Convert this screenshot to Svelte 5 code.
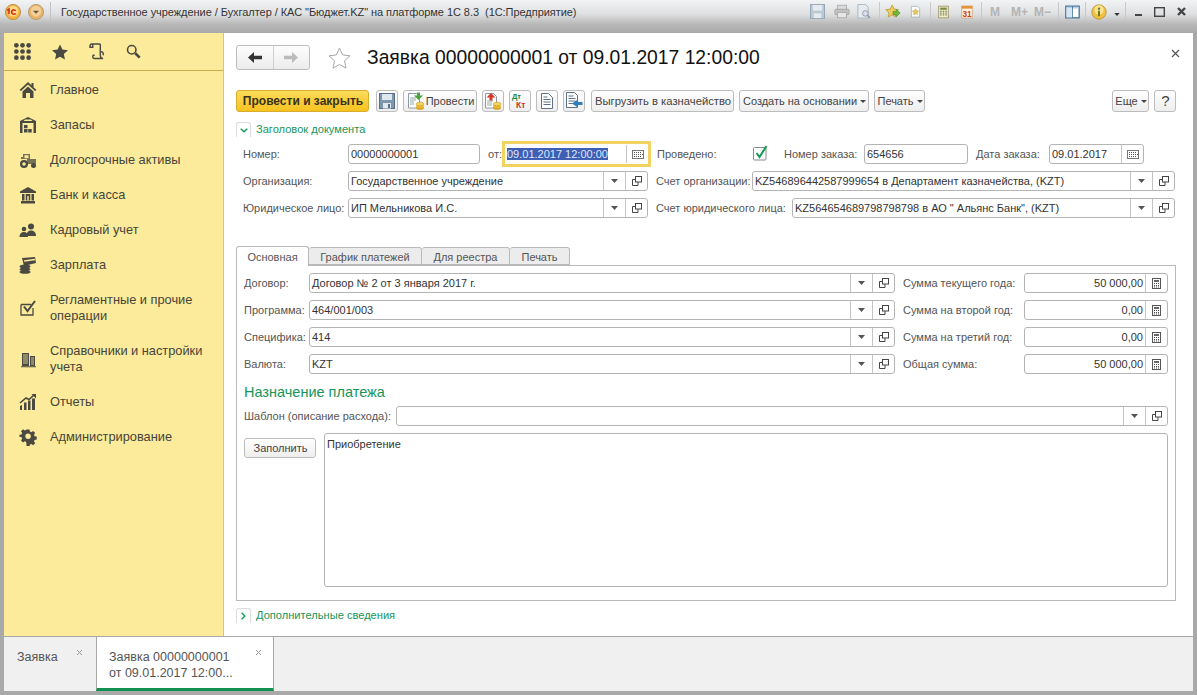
<script lang="ts">
  const menu = [
    { icon: 'home', label: ['Главное'] },
    { icon: 'stock', label: ['Запасы'] },
    { icon: 'tractor', label: ['Долгосрочные активы'] },
    { icon: 'bank', label: ['Банк и касса'] },
    { icon: 'people', label: ['Кадровый учет'] },
    { icon: 'salary', label: ['Зарплата'] },
    { icon: 'check', label: ['Регламентные и прочие', 'операции'] },
    { icon: 'book', label: ['Справочники и настройки', 'учета'] },
    { icon: 'chart', label: ['Отчеты'] },
    { icon: 'gear', label: ['Администрирование'] }
  ];

  const amounts = [
    { label: 'Сумма текущего года:', value: '50 000,00' },
    { label: 'Сумма на второй год:', value: '0,00' },
    { label: 'Сумма на третий год:', value: '0,00' },
    { label: 'Общая сумма:', value: '50 000,00' }
  ];
  const leftRows = [
    { label: 'Договор:', value: 'Договор № 2 от 3 января 2017 г.' },
    { label: 'Программа:', value: '464/001/003' },
    { label: 'Специфика:', value: '414' },
    { label: 'Валюта:', value: 'KZT' }
  ];
  const tabs = ['Основная', 'График платежей', 'Для реестра', 'Печать'];
</script>

{#snippet drop()}
  <span class="fbtn"><svg width="7" height="4" viewBox="0 0 7 4"><path d="M0 0h7L3.5 4z" fill="#555"/></svg></span>
{/snippet}
{#snippet open()}
  <span class="fbtn"><svg width="10" height="10" viewBox="0 0 10 10" fill="none" stroke="#444"><rect x="3.5" y="0.5" width="6" height="5.5" fill="#fff"/><path d="M3.5 3.500H.5v6h5.500V6"/></svg></span>
{/snippet}
{#snippet cal()}
  <span class="fbtn"><svg width="12" height="9" viewBox="0 0 12 9"><rect x=".5" y=".5" width="11" height="8" fill="#fff" stroke="#777"/><path d="M2 2.500h1M4 2.500h1M6 2.500h1M8 2.500h1M2 4.500h1M4 4.500h1M6 4.500h1M8 4.500h1M10 4.500h1M2 6.500h1M4 6.500h1M6 6.500h1M8 6.500h1" stroke="#555"/></svg></span>
{/snippet}
{#snippet calc()}
  <span class="fbtn"><svg width="9" height="11" viewBox="0 0 9 11"><rect x=".5" y=".5" width="8" height="10" fill="#fff" stroke="#555"/><rect x="2" y="2" width="5" height="2" fill="#666"/><path d="M2 5.500h1M4 5.500h1M6 5.500h1M2 7.500h1M4 7.500h1M6 7.500h1M2 9h1M4 9h1M6 9h1" stroke="#444"/></svg></span>
{/snippet}
{#snippet coins(x, y)}
  <g transform="translate({x} {y})"><ellipse cx="4" cy="6" rx="4" ry="1.800" fill="#d9a520"/><ellipse cx="4" cy="4" rx="4" ry="1.800" fill="#e8bd3a"/><ellipse cx="4" cy="2" rx="4" ry="1.800" fill="#f4d660" stroke="#c08f18" stroke-width=".5"/></g>
{/snippet}
{#snippet menuIcon(name)}
  <svg class="micon" width="18" height="18" viewBox="0 0 18 18" fill="#4a4a42">
    {#if name === 'home'}
      <path d="M9 1 0.5 9l1.500 1L9 3.600 16 10l1.500-1-3-2.800V2h-2v2.300z"/><path d="M3.500 10.500 9 5.500l5.500 5V17H11v-5H7v5H3.500z"/>
    {:else if name === 'stock'}
      <path d="M9 1 1 5v12h16V5zM6 3.500h6L13.500 5h-9z"/><rect x="3.500" y="7" width="11" height="10" fill="#fbeb9a"/><rect x="5" y="9" width="3.500" height="3.200"/><rect x="5" y="13" width="3.500" height="3.500"/><rect x="9.200" y="13" width="3.500" height="3.500"/>
    {:else if name === 'tractor'}
      <path d="M4 3h7v5h6v5H8V8H2V6h2z" opacity=".75"/><rect x="5.500" y="4.200" width="4" height="3" fill="#fbeb9a"/><circle cx="5" cy="13" r="4"/><circle cx="5" cy="13" r="1.800" fill="#fbeb9a"/><circle cx="14.500" cy="14.500" r="2.500"/>
    {:else if name === 'bank'}
      <path d="M9 1 1 5.500V7h16V5.500z"/><rect x="2" y="15" width="14" height="2.500"/><rect x="3" y="8" width="2.500" height="6.500"/><rect x="12.500" y="8" width="2.500" height="6.500"/><rect x="6.700" y="8" width="4.600" height="6.500"/><rect x="8.300" y="10" width="1.400" height="4.500" fill="#fbeb9a"/>
    {:else if name === 'people'}
      <circle cx="12" cy="5.500" r="3"/><path d="M7.500 15c0-4 2-5.500 4.500-5.500s5 1.500 5 5.500z"/><circle cx="5" cy="8" r="2.300"/><path d="M.5 16c0-3.500 2-5 4.500-5s4 1.500 4 5z"/>
    {:else if name === 'salary'}
      <path d="M3 2 16 1l1 6-12 3z"/><rect x="5" y="3.600" width="11" height="1.500" fill="#fbeb9a" transform="rotate(-8 10 4)"/><ellipse cx="6" cy="10.500" rx="5.500" ry="2"/><ellipse cx="6" cy="13.300" rx="5.500" ry="2"/><ellipse cx="6" cy="16" rx="5.500" ry="1.800"/>
    {:else if name === 'check'}
      <path d="M2 5.500h10M2 5.500v10.500h12V9" fill="none" stroke="#4a4a42" stroke-width="1.300"/><path d="M5 7.500l3.500 4.500L16 2" fill="none" stroke="#4a4a42" stroke-width="2"/>
    {:else if name === 'book'}
      <path d="M3 3h7v13H3zM11 6h5v10h-5zM2 16.200h15v1H2z"/><path d="M4 5h5M4 7h5M4 9h5M4 11h5M4 13h5M12 8h3M12 10h3M12 12h3M12 14h3" stroke="#fbeb9a" stroke-width=".8"/>
    {:else if name === 'chart'}
      <path d="M1 13l2-1v5H1zM5 9.500h2.500V17H5zM9 7.500h2.500V17H9zM13 5.500h3V17h-3z"/><path d="M1 10 7 5l3 1.500L15 2" fill="none" stroke="#4a4a42" stroke-width="1.600"/><path d="M12.500 1H17v4.500z"/>
    {:else}
      <path fill-rule="evenodd" d="M7.400 1h3.200l.4 2.300 1.500.7 2-1.300 2.200 2.200-1.300 2 .7 1.500 2.300.4v3.200l-2.300.4-.7 1.500 1.300 2-2.200 2.200-2-1.300-1.500.7-.4 2.300H7.400L7 14.600l-1.500-.7-2 1.300-2.200-2.200 1.300-2-.7-1.500L-.4 9.100V6.900l2.300-.4.7-1.500-1.300-2L3.500 .8l2 1.300 1.500-.7zM9 5.500a3 3 0 100 6 3 3 0 000-6z" transform="translate(.8 .5) scale(.92)"/>
    {/if}
  </svg>
{/snippet}

<div class="window">
  <header class="titlebar">
    <div class="tleft">
      <svg width="16" height="16" viewBox="0 0 18 18"><circle cx="9" cy="9" r="8.500" fill="#f6b13a" stroke="#b98a4a"/><circle cx="9" cy="8" r="6" fill="#fbd985"/><path d="M4 7l2-1.500V11M13.500 7.500a2.500 2.500 0 100 2.800" transform="translate(-1.500 .2)" fill="none" stroke="#d2281c" stroke-width="1.700"/></svg>
      <svg width="16" height="16" viewBox="0 0 18 18"><circle cx="9" cy="9" r="8.500" fill="#e8b26a" stroke="#b4956a"/><circle cx="9" cy="8" r="6" fill="#f4cf98"/><path d="M5.500 7.500h7L9 11z" fill="#6a5a40"/></svg>
      <span class="tsep"></span>
      <span class="ttext">Государственное учреждение / Бухгалтер / КАС "Бюджет.KZ" на платформе 1С 8.3&nbsp; (1С:Предприятие)</span>
    </div>
    <div class="tright">
      <svg width="15" height="15" viewBox="0 0 16 16"><rect x=".5" y=".5" width="15" height="15" fill="#bcc8d4" stroke="#93a5b6"/><rect x="3" y="1" width="10" height="6" fill="#e5ebf0"/><rect x="4" y="10" width="8" height="5" fill="#e5ebf0"/></svg>
      <svg width="16" height="15" viewBox="0 0 18 16"><rect x="4" y="1" width="10" height="5" fill="#ddd" stroke="#aaa"/><rect x="1" y="5.500" width="16" height="6" rx="1" fill="#c2c2c2" stroke="#a5a5a5"/><rect x="4" y="9" width="10" height="6" fill="#e6e6e6" stroke="#aaa"/></svg>
      <svg width="15" height="15" viewBox="0 0 16 16"><path d="M2 .5h8l3 3V15H2z" fill="#e6ebef" stroke="#aab5bf"/><circle cx="10" cy="10" r="3" fill="#dde" stroke="#8d99a5"/><path d="M12 12l3 3" stroke="#8d99a5" stroke-width="1.500"/></svg>
      <span class="sep"></span>
      <svg width="16" height="15" viewBox="0 0 20 18"><path d="M9 1l2.400 5 5.500.7-4 3.800 1 5.500-4.900-2.700L4 16l1-5.500-4-3.800 5.500-.7z" fill="#f0cd5b" stroke="#b29a3a"/><path d="M10 9h4V6.500L19 11l-5 4.500V13h-4z" fill="#71b83c" stroke="#3f8a25" stroke-width=".7"/></svg>
      <svg width="11" height="13" viewBox="0 0 16 18"><path d="M2 1.500h9l3 3V17H2z" fill="#fff" stroke="#93a5b6"/><path d="M8 5l1.400 3 3.100.4-2.300 2.100.6 3.100L8 12.100 5.200 13.600l.6-3.100-2.300-2.100 3.100-.4z" fill="#f0cd5b" stroke="#a88e36" stroke-width=".7"/></svg>
      <span class="sep"></span>
      <svg width="11" height="14" viewBox="0 0 15 18"><rect x="1" y="1" width="13" height="16" fill="#f0eccb" stroke="#8f8a55"/><rect x="3" y="3" width="9" height="3" fill="#7b8c45"/><path d="M3 8h2M6.500 8h2M10 8h2M3 10.500h2M6.500 10.500h2M10 10.500h2M3 13h2M6.500 13h2M10 13h2" stroke="#5a6640" stroke-width="1.300"/></svg>
      <svg width="12" height="14" viewBox="0 0 16 18"><rect x="1" y="1" width="14" height="16" fill="#fdf3de" stroke="#c9a271"/><rect x="1" y="1" width="14" height="3.500" fill="#e8913c"/><text class="day" x="8" y="15" text-anchor="middle">31</text></svg>
      <span class="sep"></span>
      <span class="mem">M</span><span class="mem">M+</span><span class="mem">M−</span>
      <span class="sep"></span>
      <svg width="15" height="14" viewBox="0 0 18 16"><rect x="1" y="1" width="16" height="14" fill="#fff" stroke="#3c6e9a" stroke-width="1.500"/><rect x="1.800" y="1.800" width="14.400" height="2" fill="#b5d0e5"/><path d="M9 1v14" stroke="#3c6e9a"/><rect x="2" y="4" width="6.500" height="10.500" fill="#d7e7f2"/></svg>
      <span class="sep"></span>
      <svg width="16" height="16" viewBox="0 0 19 19"><circle cx="9.500" cy="9.500" r="8.500" fill="#f1c23f" stroke="#b98f30"/><circle cx="9.500" cy="7" r="5.500" fill="#fbe38f"/><rect x="8.300" y="8" width="2.400" height="6.500" fill="#6f7a2a"/><circle cx="9.500" cy="5.500" r="1.400" fill="#6f7a2a"/></svg>
      <svg class="caret" width="6" height="3" viewBox="0 0 7 4"><path d="M0 0h7L3.500 4z" fill="#333"/></svg>
      <span class="sep"></span>
      <svg class="wmin" width="7" height="2" viewBox="0 0 7 2"><rect width="7" height="2" fill="#444"/></svg>
      <svg width="11" height="10" viewBox="0 0 11 10" fill="none"><rect x=".7" y=".7" width="9.600" height="8.600" stroke="#444" stroke-width="1.400"/></svg>
      <svg width="9" height="9" viewBox="0 0 9 9"><path d="M1 1l7 7M8 1L1 8" stroke="#444" stroke-width="2.400"/></svg>
    </div>
  </header>

  <div class="body">
    <aside class="side">
      <div class="quick">
        <svg width="17" height="17" viewBox="0 0 18 18" fill="#4a4a42">
          {#each [2.5, 9, 15.5] as y}{#each [2.5, 9, 15.5] as x}<circle cx={x} cy={y} r="2.500"/>{/each}{/each}
        </svg>
        <svg width="16" height="16" viewBox="0 0 18 17" fill="#4a4a42"><path d="M9 0l2.700 5.800 6.300.7-4.700 4.300 1.300 6.200L9 13.900 3.400 17l1.300-6.200L0 6.500l6.300-.7z"/></svg>
        <svg width="16" height="17" viewBox="0 0 17 18" fill="none" stroke="#4a4a42" stroke-width="1.500"><path d="M3 1h8c1.500 0 1 2 1 3v9c0 2 1 3.500 3 3.500H6c-2 0-2.500-2-1.500-3.500H6M3 1C1.500 1 .8 2.500 1 4.500h3V2.500C4 1.500 3.800 1 3 1zM12 9c3 0 3.500 2 3 4"/></svg>
        <svg width="15" height="15" viewBox="0 0 17 17" fill="none" stroke="#4a4a42"><circle cx="6.500" cy="6.500" r="4.800" stroke-width="1.800"/><path d="M10.500 10.500l5 5" stroke-width="3"/></svg>
      </div>
      <nav class="menu">
        {#each menu as m}
          <div class="mitem">
            {@render menuIcon(m.icon)}
            <div class="mlabel">{#each m.label as l}<div>{l}</div>{/each}</div>
          </div>
        {/each}
      </nav>
    </aside>

    <main class="main">
      <div class="head">
        <div class="nav">
          <span class="navb"><svg width="14" height="11" viewBox="0 0 14 11"><path d="M0 5.500 6 0v3.700h8v3.600H6V11z" fill="#333"/></svg></span>
          <span class="navb"><svg width="14" height="11" viewBox="0 0 14 11"><path d="M14 5.500 8 0v3.700H0v3.600h8V11z" fill="#bbb"/></svg></span>
        </div>
        <svg class="hstar" width="23" height="22" viewBox="0 0 23 22"><path d="M11.500 1l3.100 6.900 7.400.9-5.500 5 1.500 7.300-6.500-3.700L5 21.100l1.500-7.300L1 8.800l7.400-.9z" fill="#fff" stroke="#a8a8a8"/></svg>
        <h1>Заявка 00000000001 от 09.01.2017 12:00:00</h1>
        <svg class="hclose" width="9" height="9" viewBox="0 0 9 9"><path d="M1 1l7 7M8 1L1 8" stroke="#555" stroke-width="1.200"/></svg>
      </div>

      <div class="toolbar">
        <button class="b primary">Провести и закрыть</button>
        <button class="b ic">
          <svg width="16" height="16" viewBox="0 0 16 16"><rect x=".5" y=".5" width="15" height="15" fill="#7e97ad" stroke="#576f85"/><rect x="3" y="1" width="10" height="6" fill="#dfe8ef"/><rect x="4" y="10" width="8" height="5.500" fill="#dfe8ef"/><rect x="9" y="11" width="2" height="4" fill="#576f85"/></svg>
        </button>
        <button class="b withic">
          <svg width="18" height="18" viewBox="0 0 18 18"><path d="M1.500 1.500h8l3 3V16h-11z" fill="#fff" stroke="#8b9aa6"/><path d="M3 6h6M3 8h6M3 10h4M3 12h4" stroke="#9aa"/><path d="M9 .5h3v3h3L10.500 8 6 3.500h3z" fill="#4aa63a" transform="translate(1 0)"/>{@render coins(9, 10)}</svg>
          Провести
        </button>
        <button class="b ic">
          <svg width="18" height="18" viewBox="0 0 18 18"><path d="M1.500 1.500h8l3 3V16h-11z" fill="#fff" stroke="#8b9aa6"/><path d="M3 9h6M3 11h5M3 13h5" stroke="#9aa"/><path d="M7 1 2.500 5.500h3v3h3v-3h3z" fill="#d2372a"/>{@render coins(9, 10)}</svg>
        </button>
        <button class="b ic">
          <svg width="20" height="18" viewBox="0 0 20 18"><text class="dt" x="2" y="7">Дт</text><text class="kt" x="6" y="16">Кт</text></svg>
        </button>
        <button class="b ic">
          <svg width="14" height="16" viewBox="0 0 14 16"><path d="M1.500 .5h7l4 4V15.500h-11z" fill="#fff" stroke="#5d7183"/><path d="M3.500 4h4M3.500 6.500h7M3.500 9h7M3.500 11.500h7" stroke="#5d7183"/></svg>
        </button>
        <button class="b ic">
          <svg width="18" height="18" viewBox="0 0 18 18"><path d="M1.500 .5h8l3 3V15.500h-11z" fill="#fff" stroke="#5d7183"/><path d="M3.500 4h5M3.500 6.500h7M3.500 9h7M3.500 11.500h4" stroke="#5d7183"/><path d="M7 11.500 12 8v2h5.500v3H12v2z" fill="#2f7ec0"/></svg>
        </button>
        <button class="b">Выгрузить в казначейство</button>
        <button class="b">Создать на основании <i class="caret-s"></i></button>
        <button class="b">Печать <i class="caret-s"></i></button>
        <span class="grow"></span>
        <button class="b">Еще <i class="caret-s"></i></button>
        <button class="b q">?</button>
      </div>

      <div class="group">
        <span class="toggle"><svg width="8" height="5" viewBox="0 0 8 5"><path d="M.7.7 4 3.800 7.300.7" fill="none" stroke="#159a5c" stroke-width="1.400"/></svg></span>
        <span class="gtitle">Заголовок документа</span>
      </div>

      <div class="hrow">
        <span class="lbl w105">Номер:</span>
        <span class="field w132"><span class="val">00000000001</span></span>
        <span class="lbl ot">от:</span>
        <span class="field focus"><span class="val"><mark>09.01.2017 12:00:00</mark></span>{@render cal()}</span>
        <span class="lbl proved">Проведено:</span>
        <svg class="chk" width="16" height="16" viewBox="0 0 16 16"><rect x=".5" y="2.500" width="12.500" height="12.500" rx="1" fill="#fff" stroke="#8a8a8a"/><path d="M3.500 8l3 4L13.500 1" fill="none" stroke="#129a55" stroke-width="2"/></svg>
        <span class="lbl order">Номер заказа:</span>
        <span class="field w104"><span class="val">654656</span></span>
        <span class="lbl odate">Дата заказа:</span>
        <span class="field w95"><span class="val">09.01.2017</span>{@render cal()}</span>
      </div>
      <div class="hrow">
        <span class="lbl w105">Организация:</span>
        <span class="field w300"><span class="val">Государственное учреждение</span>{@render drop()}{@render open()}</span>
        <span class="lbl acc1">Счет организации:</span>
        <span class="field grow"><span class="val">KZ546896442587999654 в Департамент казначейства, (KZT)</span>{@render drop()}{@render open()}</span>
      </div>
      <div class="hrow">
        <span class="lbl w105">Юридическое лицо:</span>
        <span class="field w300"><span class="val">ИП Мельникова И.С.</span>{@render drop()}{@render open()}</span>
        <span class="lbl acc2">Счет юридического лица:</span>
        <span class="field grow"><span class="val">KZ564654689798798798 в АО " Альянс Банк", (KZT)</span>{@render drop()}{@render open()}</span>
      </div>

      <div class="tabs">
        {#each tabs as t, i}
          <span class="tab" class:active={i === 0}>{t}</span>
        {/each}
      </div>
      <section class="panel">
        <div class="cols">
          <div class="colL">
            {#each leftRows as r}
              <div class="prow">
                <span class="lbl w65">{r.label}</span>
                <span class="field grow"><span class="val">{r.value}</span>{@render drop()}{@render open()}</span>
              </div>
            {/each}
          </div>
          <div class="colR">
            {#each amounts as a}
              <div class="prow">
                <span class="lbl w121">{a.label}</span>
                <span class="field grow"><span class="val right">{a.value}</span>{@render calc()}</span>
              </div>
            {/each}
          </div>
        </div>
        <h2>Назначение платежа</h2>
        <div class="prow tpl">
          <span class="lbl w152">Шаблон (описание расхода):</span>
          <span class="field grow"><span class="val"></span>{@render drop()}{@render open()}</span>
        </div>
        <div class="purpose">
          <button class="b fill">Заполнить</button>
          <div class="area">Приобретение</div>
        </div>
      </section>

      <div class="group extra">
        <span class="toggle"><svg width="5" height="8" viewBox="0 0 5 8"><path d="M.7.7 3.800 4 .7 7.300" fill="none" stroke="#159a5c" stroke-width="1.400"/></svg></span>
        <span class="gtitle">Дополнительные сведения</span>
      </div>
    </main>
  </div>

  <footer class="open-tabs">
    <div class="otab">
      <span>Заявка</span>
      <svg class="ox" width="7" height="7" viewBox="0 0 7 7"><path d="M1 1l5 5M6 1L1 6" stroke="#999"/></svg>
    </div>
    <div class="otab on">
      <span>Заявка 00000000001<br/>от 09.01.2017 12:00...</span>
      <svg class="ox" width="7" height="7" viewBox="0 0 7 7"><path d="M1 1l5 5M6 1L1 6" stroke="#999"/></svg>
    </div>
  </footer>
</div>

<style>
  :global(body) {
    margin: 0;
    background: #a9a9a9;
  }
  .window {
    width: 1197px;
    height: 695px;
    overflow: hidden;
    display: flex;
    flex-direction: column;
    background: linear-gradient(#f2f3f4 0, #dfe0e2 14px, #b9b9b9 24px, #a9a9a9 33px);
    font: 11px/14px "Liberation Sans", Arial, sans-serif;
    color: #4a4a4a;
    box-sizing: border-box;
    padding: 0 4px 4px;
  }
  .titlebar {
    height: 33px;
    flex: none;
    display: flex;
    justify-content: space-between;
    padding: 1px 0 0;
    box-sizing: border-box;
    margin: 0 -4px 0 1px;
  }
  .tleft, .tright {
    display: flex;
    align-items: center;
    height: 21px;
  }
  .tleft svg:first-child { margin-right: 7px; }
  .tsep {
    width: 1px;
    height: 20px;
    background: #c2c2c2;
    margin: 0 10px 0 6px;
  }
  .ttext { color: #333; font-size: 11px; letter-spacing: -0.05px; }
  .tright { padding-right: 11px; }
  .tright > :nth-child(2) { margin-left: 9px; }
  .tright > :nth-child(3) { margin-left: 6px; }
  .tright > :nth-child(4) { margin-left: 8px; }
  .tright > :nth-child(5) { margin-left: 5px; }
  .tright > :nth-child(6) { margin-left: 9px; }
  .tright > :nth-child(7) { margin-left: 9px; }
  .tright > :nth-child(8) { margin-left: 7px; }
  .tright > :nth-child(9) { margin-left: 12px; }
  .tright > :nth-child(10) { margin-left: 8px; }
  .tright > :nth-child(11) { margin-left: 8px; }
  .tright > :nth-child(12) { margin-left: 11px; }
  .tright > :nth-child(13) { margin-left: 6px; }
  .tright > :nth-child(14) { margin-left: 7px; }
  .tright > :nth-child(15) { margin-left: 6px; }
  .tright > :nth-child(16) { margin-left: 5px; }
  .tright > :nth-child(17) { margin-left: 5px; }
  .tright > :nth-child(18) { margin-left: 7px; }
  .tright > :nth-child(19) { margin-left: 5px; }
  .tright > :nth-child(20) { margin-left: 9px; }
  .tright > :nth-child(21) { margin-left: 12px; }
  .tright > :nth-child(22) { margin-left: 12px; }
  .sep {
    width: 1px;
    height: 19px;
    background: #c8c8c8;
  }
  .mem {
    font: bold 12px "Liberation Sans", sans-serif;
    color: #b3b3b3;
  }
  .day { font: bold 11px "Liberation Sans", sans-serif; fill: #c9401c; }
  .caret { margin-top: 6px; }
  .wmin { margin-top: 6px; }

  .body {
    flex: 1;
    min-height: 0;
    display: flex;
  }
  .side {
    width: 220px;
    flex: none;
    background: #fbeb9a;
    border-right: 1px solid #d9c76e;
    box-sizing: border-box;
  }
  .quick {
    height: 38px;
    display: flex;
    align-items: center;
    gap: 21px;
    padding: 0 0 0 10px;
    border-bottom: 1px solid #c8ad4e;
    box-sizing: border-box;
  }
  .menu {
    padding-top: 1px;
    display: flex;
    flex-direction: column;
  }
  .mitem {
    display: flex;
    align-items: center;
    min-height: 35px;
    padding-left: 15px;
    color: #47453a;
    font-size: 12.8px;
    line-height: 16px;
  }
  .mitem:nth-child(7), .mitem:nth-child(8) { min-height: 51px; }
  .micon { flex: none; margin-right: 13px; }

  .main {
    flex: 1;
    min-width: 0;
    background: #fff;
    padding: 12px 17px 0 12px;
    box-sizing: border-box;
  }
  .head {
    display: flex;
    align-items: center;
    height: 25px;
  }
  .nav {
    display: flex;
    width: 74px;
    height: 25px;
    border: 1px solid #bdbdbd;
    border-radius: 3px;
    box-sizing: border-box;
    background: linear-gradient(#fdfdfd, #ececec);
  }
  .navb {
    flex: 1;
    display: flex;
    align-items: center;
    justify-content: center;
  }
  .navb + .navb { border-left: 1px solid #d0d0d0; }
  .hstar { margin-left: 18px; }
  h1 {
    margin: 0 0 0 16px;
    font: 19.3px/26px "Liberation Sans", sans-serif;
    color: #111;
    flex: 1;
    padding-top: 1px;
  }
  .hclose { margin: 0 -4px 8px 0; }

  .toolbar {
    display: flex;
    align-items: center;
    margin-top: 20px;
    height: 22px;
    gap: 5px;
  }
  .grow { flex: 1; min-width: 0; }
  .b {
    font: 11px/14px "Liberation Sans", sans-serif;
    color: #444;
    height: 22px;
    padding: 0 3px 0 4px;
    background: linear-gradient(#fefefe, #eeeeee);
    border: 1px solid #bcbcbc;
    border-radius: 3px;
    box-sizing: border-box;
    display: inline-flex;
    align-items: center;
    justify-content: center;
    white-space: nowrap;
  }
  .primary {
    width: 133px;
    background: linear-gradient(#fbdc5b, #f6c21f);
    border-color: #d8ac2c;
    color: #3a3218;
    font-size: 12px;
    font-weight: bold;
    margin-right: 2px;
  }
  .ic { width: 22px; padding: 0; }
  .withic { width: 74px; padding: 0 0 0 1px; gap: 1px; }
  .toolbar .b:nth-child(8) { margin-left: 1px; width: 143px; font-size: 11.25px; }
  .toolbar .b:nth-child(9) { width: 130px; }
  .toolbar .b:nth-child(10) { width: 51px; }
  .toolbar .b:nth-child(12) { width: 37px; }
  .caret-s {
    display: inline-block;
    width: 0;
    height: 0;
    border: 3px solid transparent;
    border-top: 3px solid #444;
    border-bottom: 0;
    margin-left: 3px;
    margin-top: 1px;
  }
  .q { width: 22px; font-size: 15px; }
  .dt { font: bold 7.5px "Liberation Sans", sans-serif; fill: #1d8a3f; }
  .kt { font: bold 8.5px "Liberation Sans", sans-serif; fill: #c9301f; }

  .group {
    display: flex;
    align-items: center;
    height: 15px;
    margin-top: 10px;
  }
  .toggle {
    width: 15px;
    height: 15px;
    border: 1px solid #dcdcdc;
    border-bottom: 0;
    border-radius: 3px 3px 0 0;
    box-sizing: border-box;
    display: flex;
    align-items: center;
    justify-content: center;
    margin-right: 5px;
  }
  .gtitle { color: #17945a; font-size: 11.1px; margin-bottom: 2px; }

  .hrow {
    display: flex;
    align-items: center;
    height: 20px;
    margin-top: 7px;
    padding-left: 7px;
    margin-right: 1px;
  }
  .lbl { flex: none; color: #555; white-space: nowrap; font-size: 11px; }
  .w105 { width: 105px; }
  .w132 { width: 132px; flex: none; }
  .w104 { width: 104px; flex: none; }
  .w95 { width: 95px; flex: none; }
  .w300 { width: 300px; flex: none; }
  .w65 { width: 65px; }
  .w121 { width: 121px; }
  .w152 { width: 152px; }
  .ot { margin-left: 8px; width: 14px; }
  .proved { margin-left: 6px; width: 96px; }
  .order { margin-left: 15px; width: 80px; }
  .odate { margin-left: 8px; width: 73px; }
  .chk { flex: none; margin-bottom: 3px; }
  .acc1 { margin-left: 8px; width: 96px; }
  .acc2 { margin-left: 8px; width: 136px; }

  .field {
    height: 20px;
    border: 1px solid #b4b4b4;
    border-radius: 3px;
    box-sizing: border-box;
    display: flex;
    align-items: stretch;
    background: #fff;
    min-width: 0;
  }
  .val {
    flex: 1;
    min-width: 0;
    padding: 2px 2px 0;
    color: #333;
    white-space: nowrap;
    overflow: hidden;
    font-size: 11px;
    line-height: 15px;
  }
  .right { text-align: right; }
  mark {
    background: #3e5fb4;
    color: #dfe6fa;
  }
  .fbtn {
    width: 21px;
    flex: none;
    border-left: 1px solid #c4c4c4;
    display: flex;
    align-items: center;
    justify-content: center;
  }
  .focus {
    width: 149px;
    flex: none;
    height: 26px;
    margin: -3px 0;
    border: 3px solid #f2d261;
    border-radius: 0;
  }
  .focus .val { padding-top: 3px; }
  .focus .fbtn { margin: 1px 0; width: 21px; }

  .tabs {
    display: flex;
    margin-top: 28px;
    height: 19px;
    align-items: flex-end;
  }
  .tab {
    height: 18px;
    line-height: 18px;
    text-align: center;
    white-space: nowrap;
    box-sizing: border-box;
    background: #ececec;
    border: 1px solid #b9b9b9;
    border-left: 0;
    border-radius: 3px 3px 0 0;
    font-size: 11px;
    color: #555;
  }
  .tab:nth-child(1) { width: 73px; }
  .tab:nth-child(2) { width: 113px; }
  .tab:nth-child(3) { width: 88px; }
  .tab:nth-child(4) { width: 60px; }
  .tab.active {
    background: #fff;
    height: 20px;
    line-height: 20px;
    margin-bottom: -1px;
    position: relative;
    border-left: 1px solid #b9b9b9;
    border-bottom: 0;
    z-index: 1;
  }
  .panel {
    border: 1px solid #b9b9b9;
    height: 336px;
    box-sizing: border-box;
    padding: 7px 7px 0;
  }
  .cols {
    display: flex;
    gap: 8px;
  }
  .colL { width: 651px; flex: none; }
  .colR { flex: 1; min-width: 0; }
  .prow {
    display: flex;
    align-items: center;
    height: 20px;
    margin-bottom: 7px;
  }
  h2 {
    margin: 2px 0 0;
    font: 14.5px/18px "Liberation Sans", sans-serif;
    color: #17945a;
  }
  .tpl { margin-top: 5px; margin-bottom: 0; }
  .purpose {
    display: flex;
    gap: 8px;
    margin-top: 7px;
  }
  .fill {
    width: 72px;
    height: 20px;
    margin-top: 5px;
    flex: none;
  }
  .area {
    flex: 1;
    height: 154px;
    border: 1px solid #b4b4b4;
    border-radius: 3px;
    box-sizing: border-box;
    padding: 3px 2px;
    color: #333;
    font-size: 11px;
  }
  .extra { margin-top: 7px; }

  .open-tabs {
    height: 55px;
    flex: none;
    display: flex;
    background: #f0f0f0;
    border-top: 1px solid #a8a8a8;
    box-sizing: border-box;
  }
  .otab {
    width: 92px;
    position: relative;
    padding: 12px 0 0 13px;
    box-sizing: border-box;
    font-size: 12.5px;
    line-height: 16px;
    color: #555;
  }
  .otab.on {
    width: 178px;
    background: #fff;
    border-left: 1px solid #a8a8a8;
    border-right: 1px solid #a8a8a8;
    padding-left: 12px;
    border-bottom: 3px solid #11914f;
  }
  .ox {
    position: absolute;
    top: 12px;
    right: 13px;
  }
  .on .ox { right: 11px; }
</style>
